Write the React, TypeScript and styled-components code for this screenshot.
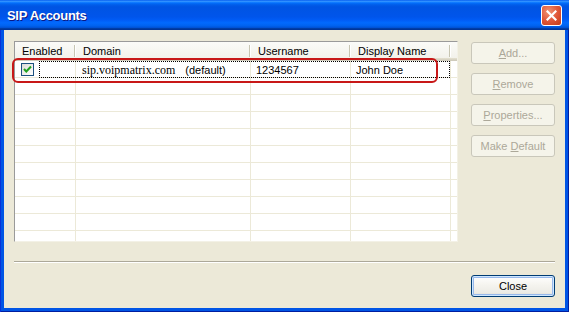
import styled, { createGlobalStyle } from "styled-components"

const GlobalStyle = createGlobalStyle`
  html, body {
    margin: 0;
    padding: 0;
    background: #ffffff;
  }
  body {
    font-family: "Liberation Sans", Arial, sans-serif;
    font-size: 11px;
    color: #000;
  }
`

const Window = styled.div`
  width: 569px;
  height: 312px;
  display: flex;
  flex-direction: column;
  background: #0055e5;
  box-shadow: inset 1px 0 #0831d9, inset -1px 0 #001ea0, inset 0 -1px #001ea0;
  overflow: hidden;
`

const TitleBar = styled.div`
  height: 30px;
  flex: none;
  display: flex;
  align-items: center;
  justify-content: space-between;
  padding: 0 7px 0 7px;
  background: linear-gradient(
    to bottom,
    #0058ee 0%,
    #3593ff 4%,
    #288eff 6%,
    #127dff 8%,
    #036ffc 10%,
    #0262ee 14%,
    #0057e5 20%,
    #0054e3 24%,
    #0055eb 56%,
    #005bf5 66%,
    #026afe 76%,
    #0062ef 86%,
    #0052d6 92%,
    #0040ab 94%,
    #003092 100%
  );
`

const Title = styled.span`
  font-family: "Liberation Sans", Arial, sans-serif;
  font-weight: bold;
  font-size: 13px;
  letter-spacing: -0.3px;
  color: #fff;
  text-shadow: 1px 1px #0a1883;
  margin-top: 1px;
`

const CloseX = styled.div`
  width: 19px;
  height: 19px;
  border: 1px solid #fff;
  border-radius: 3px;
  display: flex;
  align-items: center;
  justify-content: center;
  background: radial-gradient(circle at 35% 30%, #f09474 0%, #e0583a 50%, #c73a14 100%);
  margin-top: 1px;
`

const Body = styled.div`
  flex: 1;
  margin: 0 4px 4px 4px;
  background: #ece9d8;
  display: flex;
  flex-direction: column;
  padding: 11px 10px 0 10px;
`

const TopRow = styled.div`
  display: flex;
  gap: 13px;
`

const ListWrap = styled.div`
  position: relative;
  width: 444px;
  height: 201px;
  flex: none;
`

const List = styled.div`
  width: 100%;
  height: 100%;
  box-sizing: border-box;
  background: #fff;
  border: 1px solid;
  border-color: #9a9a9a #f3f1e6 #f3f1e6 #9a9a9a;
  overflow: hidden;
`

const COLS = "61px 175px 100px 100px 1fr"

const Header = styled.div`
  display: grid;
  grid-template-columns: ${COLS};
  height: 19px;
  background: linear-gradient(to bottom, #fbfbf8 0%, #f3f2eb 82%, #e2decd 86%, #d6d2c2 93%, #cbc7b8 100%);
`

const HeaderCell = styled.div<{ $pad: number; $sep?: boolean }>`
  padding-left: ${(p) => p.$pad}px;
  line-height: 18px;
  white-space: nowrap;
  overflow: hidden;
  background: ${(p) =>
    p.$sep
      ? "linear-gradient(#c7c5b2, #c7c5b2) no-repeat right 1px top 3px / 1px 12px, linear-gradient(#fff, #fff) no-repeat right 0 top 3px / 1px 12px"
      : "none"};
`

const Row = styled.div`
  position: relative;
  display: grid;
  grid-template-columns: ${COLS};
  height: 17px;
`

const Cell = styled.div<{ $last?: boolean; $pad?: number }>`
  box-sizing: border-box;
  border-bottom: 1px solid #ece9d8;
  border-right: ${(p) => (p.$last ? "none" : "1px solid #ece9d8")};
  padding-left: ${(p) => p.$pad ?? 6}px;
  padding-top: 1px;
  line-height: 16px;
  white-space: nowrap;
  overflow: hidden;
  display: flex;
  align-items: center;
`

const Serif = styled.span`
  font-family: "Liberation Serif", "Times New Roman", serif;
  font-size: 12px;
`

const Tag = styled.span`
  margin-left: 10px;
`

const CheckBox = styled.div`
  width: 11px;
  height: 11px;
  border: 1px solid #1c5180;
  background: linear-gradient(135deg, #dcdcd7 0%, #fff 100%);
  display: flex;
  align-items: center;
  justify-content: center;
`

const FocusRect = styled.div`
  position: absolute;
  left: 24px;
  top: 0;
  width: 411px;
  height: 17px;
  box-sizing: border-box;
  border: 1px dotted #000;
  pointer-events: none;
`

const Highlight = styled.div`
  position: absolute;
  left: -2px;
  top: 17px;
  width: 426px;
  height: 25px;
  box-sizing: border-box;
  border: 2px solid #c81818;
  border-radius: 6px;
  pointer-events: none;
`

const ButtonColumn = styled.div`
  display: flex;
  flex-direction: column;
  gap: 9px;
  padding-top: 1px;
`

const Button = styled.div<{ $disabled?: boolean; $default?: boolean }>`
  width: 84px;
  height: 22px;
  box-sizing: border-box;
  border-radius: 3px;
  display: flex;
  align-items: center;
  justify-content: center;
  font-family: "Liberation Sans", Arial, sans-serif;
  font-size: 11px;
  border: 1px solid ${(p) => (p.$disabled ? "#c9c7ba" : "#003c74")};
  color: ${(p) => (p.$disabled ? "#aca899" : "#000")};
  background: ${(p) =>
    p.$disabled
      ? "#f5f4ea"
      : "linear-gradient(to bottom, #ffffff 0%, #f6f5f0 40%, #ecebe5 85%, #d6d0c5 100%)"};
  box-shadow: ${(p) => (p.$default ? "inset 0 0 0 1px #cee7ff, inset 0 0 0 2px #98b8ea" : "none")};
  u {
    text-decoration: underline;
  }
`

const Separator = styled.div`
  margin-top: 19px;
  height: 1px;
  background: #aca899;
  border-bottom: 1px solid #fff;
`

const Footer = styled.div`
  display: flex;
  justify-content: flex-end;
  margin-top: 12px;
`

const ROW_COUNT = 11

export default function App() {
  const rows = Array.from({ length: ROW_COUNT }, (_, i) => i)
  return (
    <>
      <GlobalStyle />
      <Window>
        <TitleBar>
          <Title>SIP Accounts</Title>
          <CloseX>
            <svg width="11" height="11" viewBox="0 0 11 11">
              <path d="M1.5 1.5 L9.5 9.5 M9.5 1.5 L1.5 9.5" stroke="#fff" strokeWidth="2.2" strokeLinecap="square" />
            </svg>
          </CloseX>
        </TitleBar>
        <Body>
          <TopRow>
            <ListWrap>
              <List>
                <Header>
                  <HeaderCell $pad={7} $sep>Enabled</HeaderCell>
                  <HeaderCell $pad={7} $sep>Domain</HeaderCell>
                  <HeaderCell $pad={7} $sep>Username</HeaderCell>
                  <HeaderCell $pad={7} $sep>Display Name</HeaderCell>
                  <HeaderCell $pad={0} />
                </Header>
                {rows.map((i) =>
                  i === 0 ? (
                    <Row key={i}>
                      <Cell>
                        <CheckBox>
                          <svg width="9" height="9" viewBox="0 0 9 9">
                            <path d="M1 4 L3.3 6.5 L8 1.5" stroke="#21a121" strokeWidth="2" fill="none" />
                          </svg>
                        </CheckBox>
                      </Cell>
                      <Cell>
                        <Serif>sip.voipmatrix.com</Serif>
                        <Tag>(default)</Tag>
                      </Cell>
                      <Cell $pad={5}>1234567</Cell>
                      <Cell $pad={5}>John Doe</Cell>
                      <Cell $last />
                      <FocusRect />
                    </Row>
                  ) : (
                    <Row key={i}>
                      <Cell />
                      <Cell />
                      <Cell />
                      <Cell />
                      <Cell $last />
                    </Row>
                  )
                )}
              </List>
              <Highlight />
            </ListWrap>
            <ButtonColumn>
              <Button $disabled><span><u>A</u>dd...</span></Button>
              <Button $disabled><span><u>R</u>emove</span></Button>
              <Button $disabled><span><u>P</u>roperties...</span></Button>
              <Button $disabled><span>Make <u>D</u>efault</span></Button>
            </ButtonColumn>
          </TopRow>
          <Separator />
          <Footer>
            <Button $default>Close</Button>
          </Footer>
        </Body>
      </Window>
    </>
  )
}
